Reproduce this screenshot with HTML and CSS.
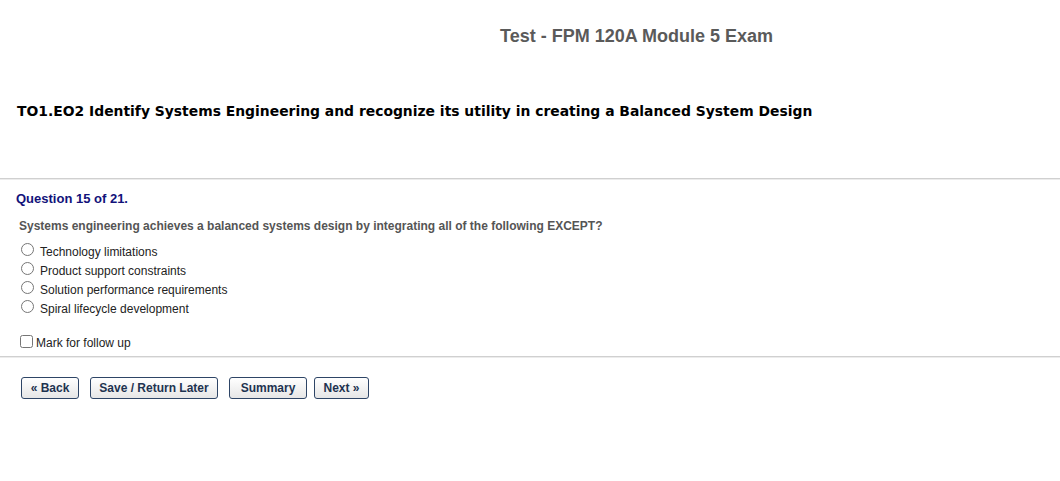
FILE: index.html
```html
<!DOCTYPE html>
<html lang="en">
  <head>
    <meta charset="UTF-8" />
    <meta name="viewport" content="width=device-width, initial-scale=1.0" />
    <title>Test - FPM 120A Module 5 Exam</title>
    <link rel="stylesheet" href="styles.css">
  </head>
  <body>
    <div class="exam-header">
      <h1 class="exam-title">Test - FPM 120A Module 5 Exam</h1>
    </div>

    <h2 class="objective">TO1.EO2 Identify Systems Engineering and recognize its utility in creating a Balanced System Design</h2>

    <hr class="divider divider-top" />

    <form class="question-form">
      <div class="question-count">Question 15 of 21.</div>
      <div class="question-text">Systems engineering achieves a balanced systems design by integrating all of the following EXCEPT?</div>

      <ul class="answers">
        <li><label><input type="radio" name="answer" value="1" /> Technology limitations</label></li>
        <li><label><input type="radio" name="answer" value="2" /> Product support constraints</label></li>
        <li><label><input type="radio" name="answer" value="3" /> Solution performance requirements</label></li>
        <li><label><input type="radio" name="answer" value="4" /> Spiral lifecycle development</label></li>
      </ul>

      <label class="follow-up"><input type="checkbox" name="followUp" />Mark for follow up</label>

      <hr class="divider" />

      <div class="nav-buttons">
        <button type="button" class="nav-btn btn-back">&laquo; Back</button>
        <button type="button" class="nav-btn btn-save">Save / Return Later</button>
        <button type="button" class="nav-btn btn-summary">Summary</button>
        <button type="button" class="nav-btn btn-next">Next &raquo;</button>
      </div>
    </form>
  </body>
</html>
```

FILE: styles.css
```css
* {
  margin: 0;
  padding: 0;
  box-sizing: border-box;
}

body {
  font-family: 'Liberation Sans', Arial, sans-serif;
  background: #fff;
  color: #222;
}

.exam-header {
  padding: 26px 0 0 500px;
  height: 96px;
}

.exam-title {
  font-size: 18px;
  font-weight: bold;
  color: #5a5a5a;
  line-height: 20px;
}

.objective {
  font-family: 'DejaVu Sans', Verdana, sans-serif;
  font-size: 13.9px;
  font-weight: bold;
  color: #000;
  padding: 1px 0 0 17px;
  line-height: 28px;
  height: 82px;
}

.divider {
  border: none;
  border-top: 1px solid #d0d0d0;
  border-bottom: 1px solid #ececec;
}

.divider-top {
  margin-bottom: 11px;
}

.question-count {
  font-size: 13px;
  font-weight: bold;
  color: #12127a;
  padding-left: 16px;
  line-height: 16px;
  margin-bottom: 12px;
}

.question-text {
  font-size: 12px;
  font-weight: bold;
  color: #555;
  padding-left: 19px;
  line-height: 14px;
  margin-bottom: 9px;
}

.answers {
  list-style: none;
  padding-left: 20px;
  margin-bottom: 17px;
}

.answers li {
  height: 19px;
  font-size: 12px;
  color: #222;
}

.answers label {
  display: flex;
  align-items: center;
  gap: 6px;
  height: 19px;
}

.answers input[type="radio"] {
  width: 13px;
  height: 13px;
  margin: 0 0 4px 1px;
}

.follow-up {
  display: flex;
  align-items: center;
  padding-left: 20px;
  font-size: 12px;
  color: #222;
  height: 16px;
  margin-bottom: 5px;
}

.follow-up input {
  width: 13px;
  height: 13px;
  margin: 0 3px 3px 0;
}

.nav-buttons {
  display: flex;
  padding: 19px 0 0 21px;
}

.nav-btn {
  font-family: 'Liberation Sans', Arial, sans-serif;
  font-size: 12px;
  font-weight: bold;
  color: #1e3350;
  background: linear-gradient(#ffffff, #e6e6e6);
  border: 1px solid #2e4566;
  border-radius: 3px;
  height: 22px;
  margin-right: 11px;
  cursor: pointer;
}

.nav-btn:hover {
  background: linear-gradient(#ffffff, #d8d8d8);
}

.btn-back {
  width: 58px;
}

.btn-save {
  width: 128px;
}

.btn-summary {
  width: 78px;
  margin-right: 7px;
}

.btn-next {
  width: 55px;
}
```
